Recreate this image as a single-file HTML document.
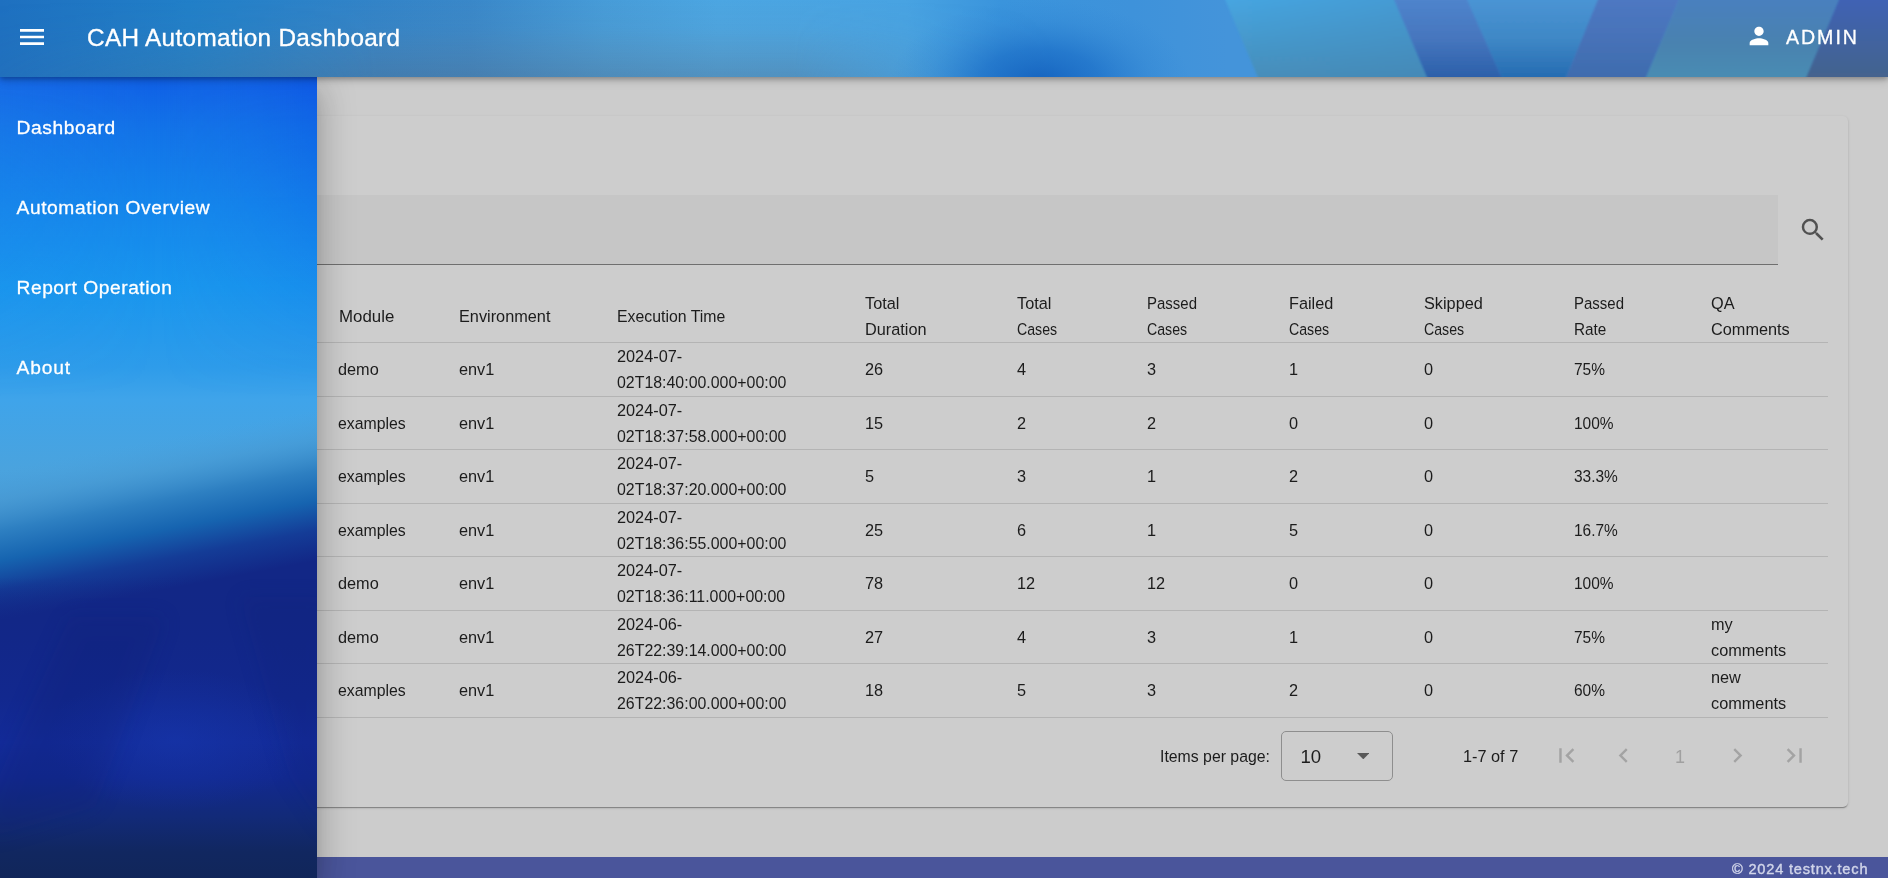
<!DOCTYPE html>
<html lang="en">
<head>
<meta charset="utf-8">
<title>CAH Automation Dashboard</title>
<style>
*{box-sizing:border-box;margin:0;padding:0}
html,body{width:1891px;height:878px;overflow:hidden;background:#fff;font-family:"Liberation Sans",sans-serif}
#app{will-change:transform;position:absolute;left:0;top:0;width:1888px;height:878px;background:#cccccc;overflow:hidden}
/* toolbar */
#bar{position:absolute;left:0;top:0;width:1888px;height:77px;z-index:5;background:#3a8fd0;box-shadow:0 2px 5px rgba(0,0,0,.27),0 4px 9px rgba(0,0,0,.12)}
#barbg{position:absolute;left:0;top:0;width:1888px;height:77px;display:block}
#bar .menu{position:absolute;left:16.2px;top:21px}
#bar h1{position:absolute;left:87px;top:21.5px;font-size:24.3px;line-height:32px;font-weight:400;color:#fff;white-space:nowrap;letter-spacing:.34px;-webkit-text-stroke:.35px #fff}
#bar .user{position:absolute;left:1745px;top:22px}
#bar .admin{position:absolute;left:1786px;top:25px;font-size:19.6px;line-height:24px;color:#fff;letter-spacing:1.95px;-webkit-text-stroke:.3px #fff}
/* sidenav */
#nav{position:absolute;left:0;top:77px;width:317px;height:801px;z-index:4;background:#1683e8;box-shadow:0 9.6px 12px -6px rgba(0,0,0,.2),0 19px 29px 2.4px rgba(0,0,0,.14),0 7px 36px 6px rgba(0,0,0,.12)}
#navbg{position:absolute;left:0;top:0;display:block}
#nav a{position:absolute;left:16.5px;color:#fff;font-size:19.2px;line-height:24px;font-weight:400;white-space:nowrap;text-decoration:none;-webkit-text-stroke:.3px #fff}
/* card */
#card{position:absolute;left:0;top:116px;width:1848px;height:691px;background:#cdcdcd;border-radius:0 5px 5px 0;box-shadow:0 2px 1px -1px rgba(0,0,0,.2),0 1px 1px rgba(0,0,0,.14),0 1px 3px rgba(0,0,0,.12)}
#search{position:absolute;left:0;top:195px;width:1778px;height:70px;background:#c6c6c6;border-bottom:1px solid #6f6f6f}
#sicon{position:absolute;left:1798px;top:214.5px}
.row{position:absolute;left:0;width:1828px;border-bottom:1px solid #b4b4b4;display:grid;
 grid-template-columns:320px 120px 158px 248px 152px 130px 142px 135px 150px 137px 136px;align-items:center;
 font-size:16.3px;line-height:26px;color:#1c1c1c}
.row div{padding-left:19px;white-space:nowrap}
.sx{display:inline-block;transform-origin:0 50%;transform:scaleX(var(--s))}
.up div{position:relative;top:-1px}
.row.h{top:290px;height:53px}
#pg{position:absolute;left:0;top:718px;width:1848px;height:76px;font-size:16.3px;color:#1c1c1c}
#pg span{position:absolute;line-height:24px;white-space:nowrap}
#sel{position:absolute;left:1281px;top:13px;width:112px;height:50px;border:1px solid #8e8e8e;border-radius:5px}
#foot{position:absolute;left:0;top:857px;width:1888px;height:21px;background:#4a559b}
#foot span{position:absolute;left:1732px;top:1.5px;font-size:14.6px;line-height:20px;font-weight:400;color:#d0d4e9;-webkit-text-stroke:.4px #d0d4e9;white-space:nowrap;letter-spacing:.8px}
</style>
</head>
<body>
<div id="app">
 <div id="card"></div>
 <div id="search"></div>
 <svg id="sicon" width="30" height="30" viewBox="0 0 24 24"><path fill="#515151" d="M15.5 14h-.79l-.28-.27A6.471 6.471 0 0 0 16 9.5 6.5 6.5 0 1 0 9.5 16c1.61 0 3.09-.59 4.23-1.57l.27.28v.79l5 4.99L20.490 19l-4.990-5zm-6 0C7.010 14 5 11.990 5 9.500S7.010 5 9.500 5 14 7.010 14 9.500 11.990 14 9.500 14z"/></svg>

 <div class="row h"><div></div><div><span class="sx" style="--s:1.035">Module</span></div><div>Environment</div><div><span class="sx" style="--s:.973">Execution Time</span></div><div>Total<br>Duration</div><div>Total<br><span class="sx" style="--s:.87">Cases</span></div><div><span class="sx" style="--s:.92">Passed</span><br><span class="sx" style="--s:.87">Cases</span></div><div>Failed<br><span class="sx" style="--s:.87">Cases</span></div><div>Skipped<br><span class="sx" style="--s:.87">Cases</span></div><div><span class="sx" style="--s:.92">Passed</span><br><span class="sx" style="--s:.94">Rate</span></div><div>QA<br>Comments</div></div>
 <div class="row up" style="top:343px;height:54px"><div></div><div style="padding-left:18px">demo</div><div>env1</div><div>2024-07-<br><span class="sx" style="--s:.977">02T18:40:00.000+00:00</span></div><div>26</div><div>4</div><div>3</div><div>1</div><div>0</div><div><span class="sx" style="--s:.95">75%</span></div><div></div></div>
 <div class="row" style="top:397px;height:53px"><div></div><div style="padding-left:18px"><span class="sx" style="--s:.972">examples</span></div><div>env1</div><div>2024-07-<br><span class="sx" style="--s:.977">02T18:37:58.000+00:00</span></div><div>15</div><div>2</div><div>2</div><div>0</div><div>0</div><div><span class="sx" style="--s:.95">100%</span></div><div></div></div>
 <div class="row up" style="top:450px;height:54px"><div></div><div style="padding-left:18px"><span class="sx" style="--s:.972">examples</span></div><div>env1</div><div>2024-07-<br><span class="sx" style="--s:.977">02T18:37:20.000+00:00</span></div><div>5</div><div>3</div><div>1</div><div>2</div><div>0</div><div><span class="sx" style="--s:.95">33.3%</span></div><div></div></div>
 <div class="row" style="top:504px;height:53px"><div></div><div style="padding-left:18px"><span class="sx" style="--s:.972">examples</span></div><div>env1</div><div>2024-07-<br><span class="sx" style="--s:.977">02T18:36:55.000+00:00</span></div><div>25</div><div>6</div><div>1</div><div>5</div><div>0</div><div><span class="sx" style="--s:.95">16.7%</span></div><div></div></div>
 <div class="row up" style="top:557px;height:54px"><div></div><div style="padding-left:18px">demo</div><div>env1</div><div>2024-07-<br><span class="sx" style="--s:.977">02T18:36:11.000+00:00</span></div><div>78</div><div>12</div><div>12</div><div>0</div><div>0</div><div><span class="sx" style="--s:.95">100%</span></div><div></div></div>
 <div class="row" style="top:611px;height:53px"><div></div><div style="padding-left:18px">demo</div><div>env1</div><div>2024-06-<br><span class="sx" style="--s:.977">26T22:39:14.000+00:00</span></div><div>27</div><div>4</div><div>3</div><div>1</div><div>0</div><div><span class="sx" style="--s:.95">75%</span></div><div>my<br>comments</div></div>
 <div class="row up" style="top:664px;height:54px"><div></div><div style="padding-left:18px"><span class="sx" style="--s:.972">examples</span></div><div>env1</div><div>2024-06-<br><span class="sx" style="--s:.977">26T22:36:00.000+00:00</span></div><div>18</div><div>5</div><div>3</div><div>2</div><div>0</div><div><span class="sx" style="--s:.95">60%</span></div><div>new<br>comments</div></div>

 <div id="pg">
  <span style="left:1160px;top:26px"><span class="sx" style="position:static;--s:.972">Items per page:</span></span>
  <div id="sel"></div>
  <span style="left:1300.5px;top:27px;font-size:18.6px">10</span>
  <svg style="position:absolute;left:1356.6px;top:35px" width="12.6" height="6.3" viewBox="0 0 10 5"><path d="M0 0h10L5 5z" fill="#595959"/></svg>
  <span style="left:1463px;top:26px">1-7 of 7</span>
  <span style="left:1675px;top:27px;color:#a0a0a0;font-size:18px">1</span>
  <svg style="position:absolute;left:1552px;top:23px" width="29" height="29" viewBox="0 0 24 24"><path fill="#a3a3a3" d="M18.41 16.59 13.82 12l4.59-4.59L17 6l-6 6 6 6zM6 6h2v12H6z"/></svg>
  <svg style="position:absolute;left:1609px;top:23px" width="29" height="29" viewBox="0 0 24 24"><path fill="#a3a3a3" d="M15.41 7.41 14 6l-6 6 6 6 1.41-1.41L10.830 12z"/></svg>
  <svg style="position:absolute;left:1723px;top:23px" width="29" height="29" viewBox="0 0 24 24"><path fill="#a3a3a3" d="M10 6 8.590 7.410 13.170 12l-4.580 4.590L10 18l6-6z"/></svg>
  <svg style="position:absolute;left:1780px;top:23px" width="29" height="29" viewBox="0 0 24 24"><path fill="#a3a3a3" d="M5.590 7.410 10.180 12l-4.590 4.590L7 18l6-6-6-6zM16 6h2v12h-2z"/></svg>
 </div>

 <div id="foot"><span>© 2024 testnx.tech</span></div>

 <div id="nav">
  <svg id="navbg" width="317" height="801" viewBox="0 0 317 801">
   <defs>
    <linearGradient id="nv" x1="0" y1="0" x2="0" y2="801" gradientUnits="userSpaceOnUse">
     <stop offset="0" stop-color="#105fe6"/><stop offset=".0624" stop-color="#1272e8"/><stop offset=".1623" stop-color="#1486ec"/><stop offset=".2622" stop-color="#1996ee"/><stop offset=".362" stop-color="#2e9cea"/><stop offset=".4032" stop-color="#3fa4ea"/><stop offset=".4906" stop-color="#4aa3de"/><stop offset=".55" stop-color="#4a9cd6"/><stop offset="1" stop-color="#4a9cd6"/>
    </linearGradient>
    <linearGradient id="nh" x1="0" y1="0" x2="317" y2="0" gradientUnits="userSpaceOnUse">
     <stop offset="0" stop-color="#2a8ae8" stop-opacity=".25"/><stop offset=".5" stop-color="#2a8ae8" stop-opacity="0"/><stop offset="1" stop-color="#0a48e0" stop-opacity=".3"/>
    </linearGradient>
    <linearGradient id="nhm" x1="0" y1="0" x2="0" y2="801" gradientUnits="userSpaceOnUse">
     <stop offset="0" stop-color="#fff" stop-opacity="1"/><stop offset=".2" stop-color="#fff" stop-opacity=".5"/><stop offset=".4" stop-color="#fff" stop-opacity="0"/><stop offset="1" stop-color="#fff" stop-opacity="0"/>
    </linearGradient>
    <mask id="nmk"><rect width="317" height="801" fill="url(#nhm)"/></mask>
    <linearGradient id="nd" x1="0" y1="0" x2="158.1" y2="835.6" gradientUnits="userSpaceOnUse"><stop offset="0.0000" stop-color="#4aa0dc" stop-opacity="0"/><stop offset="0.4529" stop-color="#4aa0dc" stop-opacity="0"/><stop offset="0.4882" stop-color="#4596d0" stop-opacity="0.55"/><stop offset="0.5235" stop-color="#2e80c2" stop-opacity="1"/><stop offset="0.5588" stop-color="#1664b0" stop-opacity="1"/><stop offset="0.5929" stop-color="#143c97" stop-opacity="1"/><stop offset="0.6282" stop-color="#122786" stop-opacity="1"/><stop offset="1.0000" stop-color="#122786" stop-opacity="1"/></linearGradient>
    <linearGradient id="nb" x1="0" y1="0" x2="0" y2="801" gradientUnits="userSpaceOnUse"><stop offset="0.0000" stop-color="#122786" stop-opacity="0"/><stop offset="0.6242" stop-color="#122786" stop-opacity="0"/><stop offset="0.6991" stop-color="#122788" stop-opacity="1"/><stop offset="0.7740" stop-color="#12288e" stop-opacity="1"/><stop offset="0.8302" stop-color="#132b98" stop-opacity="1"/><stop offset="0.8739" stop-color="#122990" stop-opacity="1"/><stop offset="0.9238" stop-color="#122a78" stop-opacity="1"/><stop offset="0.9675" stop-color="#112760" stop-opacity="1"/><stop offset="1.0000" stop-color="#11265a" stop-opacity="1"/></linearGradient><radialGradient id="nr" cx="175" cy="663" r="130" gradientUnits="userSpaceOnUse" gradientTransform="translate(0 663) scale(1 .55) translate(0 -663)"><stop offset="0" stop-color="#1636ac" stop-opacity=".6"/><stop offset="1" stop-color="#1636ac" stop-opacity="0"/></radialGradient><filter id="nbl" x="-30%" y="-30%" width="160%" height="160%"><feGaussianBlur stdDeviation="10"/></filter>
   </defs>
   <rect width="317" height="801" fill="url(#nv)"/>
   <rect width="317" height="801" fill="url(#nh)" mask="url(#nmk)"/>
   <rect width="317" height="801" fill="url(#nd)"/>
   <rect width="317" height="801" fill="url(#nb)"/>
   <rect width="317" height="801" fill="url(#nr)"/>
   <path d="M70 540L165 540L95 730L-10 760L-10 720Z" fill="#0d1f70" opacity=".2" filter="url(#nbl)"/>
   <path d="M240 520L330 520L330 760L290 700Z" fill="#0d1f70" opacity=".16" filter="url(#nbl)"/>
  </svg>
    <a style="top:39px;letter-spacing:.6px">Dashboard</a>
  <a style="top:119px;letter-spacing:.6px">Automation Overview</a>
  <a style="top:199px;letter-spacing:.55px">Report Operation</a>
  <a style="top:279px;letter-spacing:.85px">About</a>
 </div>

 <div id="bar">
  <svg id="barbg" width="1888" height="77" viewBox="0 0 1888 77" preserveAspectRatio="none">
   <defs>
    <linearGradient id="hb" x1="0" y1="0" x2="1888" y2="0" gradientUnits="userSpaceOnUse">
     <stop offset="0" stop-color="#1e70c0"/><stop offset=".1" stop-color="#217fc8"/><stop offset=".2" stop-color="#3384c8"/>
     <stop offset=".25" stop-color="#3a88c9"/><stop offset=".32" stop-color="#479cd8"/><stop offset=".38" stop-color="#4ca6e2"/>
     <stop offset=".48" stop-color="#48a3e2"/><stop offset=".53" stop-color="#3a94dc"/><stop offset=".6" stop-color="#3e92da"/><stop offset=".65" stop-color="#4494da"/><stop offset="1" stop-color="#4494da"/>
    </linearGradient>
    <linearGradient id="hv" x1="0" y1="0" x2="0" y2="77" gradientUnits="userSpaceOnUse">
     <stop offset="0" stop-color="#6e7f90" stop-opacity="0"/><stop offset=".35" stop-color="#6e7f90" stop-opacity=".06"/><stop offset="1" stop-color="#5a7088" stop-opacity=".38"/>
    </linearGradient>
    <linearGradient id="hm" x1="0" y1="0" x2="1888" y2="0" gradientUnits="userSpaceOnUse">
     <stop offset="0" stop-color="#fff" stop-opacity=".15"/><stop offset=".12" stop-color="#fff" stop-opacity=".6"/><stop offset=".2" stop-color="#fff" stop-opacity="1"/><stop offset=".42" stop-color="#fff" stop-opacity="1"/><stop offset=".5" stop-color="#fff" stop-opacity=".2"/><stop offset=".56" stop-color="#fff" stop-opacity="0"/><stop offset="1" stop-color="#fff" stop-opacity="0"/>
    </linearGradient>
    <mask id="hmk"><rect width="1888" height="77" fill="url(#hm)"/></mask>
    <radialGradient id="hr" cx="1040" cy="82" r="150" gradientUnits="userSpaceOnUse" gradientTransform="translate(0 82) scale(1 .55) translate(0 -82)">
     <stop offset="0" stop-color="#115ebc" stop-opacity=".9"/><stop offset=".4" stop-color="#1668c4" stop-opacity=".6"/><stop offset=".75" stop-color="#2478cc" stop-opacity=".2"/><stop offset="1" stop-color="#2a80d4" stop-opacity="0"/>
    </radialGradient>
    <linearGradient id="b1" x1="0" y1="0" x2="0" y2="77" gradientUnits="userSpaceOnUse"><stop offset="0" stop-color="#46a5e0"/><stop offset="1" stop-color="#478eba"/></linearGradient>
    <linearGradient id="b1x" x1="1230" y1="0" x2="1420" y2="0" gradientUnits="userSpaceOnUse"><stop offset="0" stop-color="#3f7fb0" stop-opacity="0"/><stop offset="1" stop-color="#3f7fb0" stop-opacity=".3"/></linearGradient>
    <linearGradient id="b2" x1="0" y1="0" x2="0" y2="77" gradientUnits="userSpaceOnUse"><stop offset="0" stop-color="#4f84cc"/><stop offset=".5" stop-color="#4676be"/><stop offset="1" stop-color="#2c60aa"/></linearGradient>
    <linearGradient id="b3" x1="0" y1="0" x2="0" y2="77" gradientUnits="userSpaceOnUse"><stop offset="0" stop-color="#4a94d4"/><stop offset=".5" stop-color="#3f88c6"/><stop offset="1" stop-color="#266cb2"/></linearGradient>
    <linearGradient id="b4" x1="0" y1="0" x2="0" y2="77" gradientUnits="userSpaceOnUse"><stop offset="0" stop-color="#4e78c2"/><stop offset="1" stop-color="#3f6cae"/></linearGradient>
    <linearGradient id="b5" x1="0" y1="0" x2="0" y2="77" gradientUnits="userSpaceOnUse"><stop offset="0" stop-color="#4a80be"/><stop offset=".55" stop-color="#4a82b0"/><stop offset="1" stop-color="#4a8cb2"/></linearGradient>
    <linearGradient id="b6" x1="0" y1="0" x2="0" y2="77" gradientUnits="userSpaceOnUse"><stop offset="0" stop-color="#3f62b4"/><stop offset="1" stop-color="#44648e"/></linearGradient>
    <filter id="bl" x="-5%" y="-50%" width="110%" height="200%"><feGaussianBlur stdDeviation="1.2"/></filter>
   </defs>
   <rect width="1888" height="77" fill="url(#hb)"/>
   <rect width="1888" height="77" fill="url(#hv)" mask="url(#hmk)"/>
   <rect x="860" y="0" width="380" height="77" fill="url(#hr)"/>
   <g filter="url(#bl)">
    <path d="M1224 -3L1393 -3L1428 80L1259 80Z" fill="url(#b1)"/>
    <path d="M1224 -3L1393 -3L1428 80L1259 80Z" fill="url(#b1x)"/>
    <path d="M1393 -3L1466 -3L1503 80L1428 80Z" fill="url(#b2)"/>
    <path d="M1466 -3L1599 -3L1565 80L1503 80Z" fill="url(#b3)"/>
    <path d="M1599 -3L1680 -3L1645 80L1565 80Z" fill="url(#b4)"/>
    <path d="M1680 -3L1840 -3L1805 80L1645 80Z" fill="url(#b5)"/>
    <path d="M1840 -3L1895 -3L1895 80L1805 80Z" fill="url(#b6)"/>
   </g>
  </svg>
    <svg class="menu" width="32" height="32" viewBox="0 0 24 24"><path fill="#fff" d="M3 18h18v-2H3v2zm0-5h18v-2H3v2zm0-7v2h18V6H3z"/></svg>
  <h1>CAH Automation Dashboard</h1>
  <svg class="user" width="28" height="28" viewBox="0 0 24 24"><path fill="#fff" d="M12 12c2.210 0 4-1.790 4-4s-1.790-4-4-4-4 1.790-4 4 1.790 4 4 4zm0 2c-2.670 0-8 1.340-8 4v2h16v-2c0-2.660-5.330-4-8-4z"/></svg>
  <span class="admin">ADMIN</span>
 </div>
</div>
</body>
</html>
